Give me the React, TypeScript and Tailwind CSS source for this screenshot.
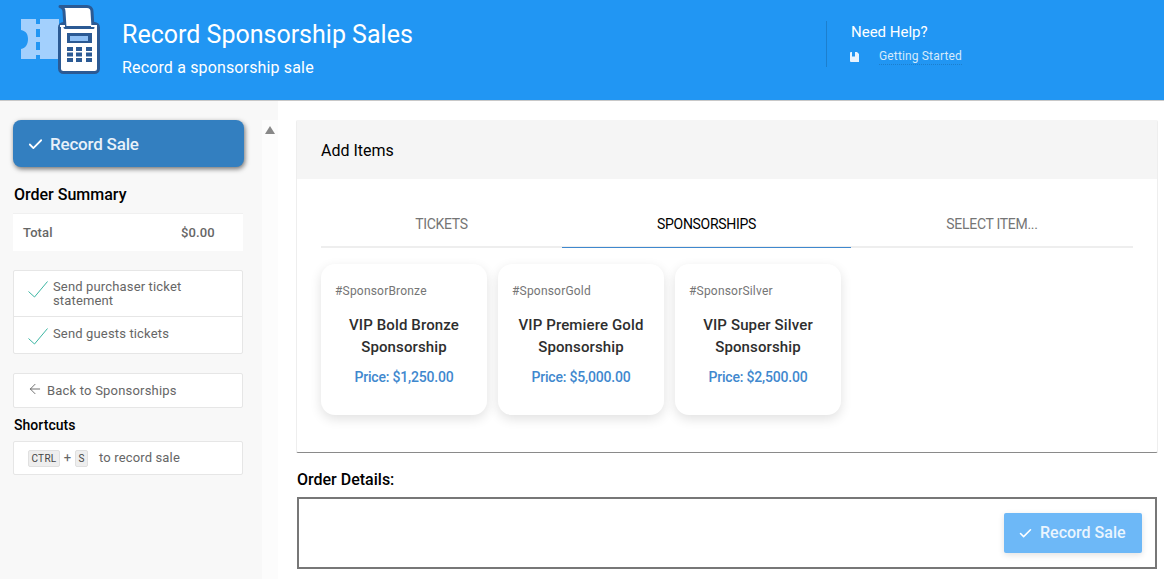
import { ArrowLeft, Check } from "lucide-react";

const sponsorships = [
  { tag: "#SponsorBronze", name: "VIP Bold Bronze Sponsorship", price: "$1,250.00" },
  { tag: "#SponsorGold", name: "VIP Premiere Gold Sponsorship", price: "$5,000.00" },
  { tag: "#SponsorSilver", name: "VIP Super Silver Sponsorship", price: "$2,500.00" },
];

function TerminalLogo() {
  return (
    <svg width="84" height="76" viewBox="20 3 84 76" className="shrink-0">
      <path d="M21 19h38v40H21V49c5-1 7-5 7-10s-2-8-7-9z" fill="#a3d0fd" />
      {[19, 29, 42, 55].map((y, i) => (
        <rect key={y} x="36" y={y} width="4" height={[5, 8, 8, 4][i]} fill="#2196f3" />
      ))}
      <rect x="59.500" y="23.500" width="39" height="49" rx="4" fill="#fff" stroke="#2b5a94" strokeWidth="3" />
      <path d="M60 6.500h27c3 0 5 2 5 5l1 16H65l-1-16c0-2-1-4-4-5z" fill="#fff" stroke="#2b5a94" strokeWidth="3" strokeLinejoin="round" />
      <rect x="60" y="25" width="5" height="2" fill="#fff" />
      <rect x="91" y="25" width="6" height="2" fill="#fff" />
      <rect x="67" y="33" width="25" height="10" fill="#2b5a94" />
      <rect x="70" y="36" width="18" height="5" fill="#8fc0f5" />
      {[67, 76, 86].flatMap((x) =>
        [47, 52.500, 58].map((y) => <rect key={`${x}-${y}`} x={x} y={y} width="6" height="4" fill="#2b5a94" />),
      )}
    </svg>
  );
}

function OptionRow({ label, border }: { label: string; border?: boolean }) {
  return (
    <div className={`flex items-start pl-[14px] pr-3 pb-[8px] ${border ? "border-t border-[#e6e6e6] pt-[10px]" : "pt-[9px]"}`}>
      <svg width="20" height="17" viewBox="0 0 20 17" className="mt-px mr-[5px] shrink-0" fill="none" stroke="#3cb5a2" strokeWidth="1">
        <path d="M0.500 10.500 L6.500 16 L19.500 0.500" />
      </svg>
      <span className="text-[13px] leading-[14px] tracking-[0.15px] text-[#666]">{label}</span>
    </div>
  );
}

export default function App() {
  return (
    <div className="h-[579px] w-[1164px] overflow-hidden bg-white font-['Roboto',sans-serif]">
      <header className="flex h-[101px] border-b border-[#c8c8c8] bg-[#2196f3] text-white">
        <div className="ml-[20px] mt-[3px]">
          <TerminalLogo />
        </div>
        <div className="ml-[18px] mt-[18px] w-[704px]">
          <h1 className="text-[25px] leading-[33px]">Record Sponsorship Sales</h1>
          <p className="mt-[7px] text-[16px] leading-[20px] tracking-[0.15px]">Record a sponsorship sale</p>
        </div>
        <div className="mt-[21px] h-[46px] border-l border-[#1c7fce] pl-6">
          <div className="mt-[2px] text-[15px] leading-[18px]">Need Help?</div>
          <div className="mt-[7px] flex items-center">
            <svg width="9" height="10" viewBox="0 0 9 10" fill="#e8f3fe" className="-ml-px mr-[20px]">
              <path d="M0 1a1 1 0 0 1 1-1h1v4.500h3V0h2l2 2v8H1a1 1 0 0 1-1-1z" />
            </svg>
            <span className="border-b border-dotted border-[#1c7fce] text-[12px] leading-[16px] tracking-[0.15px] text-[#d5eafc]">Getting Started</span>
          </div>
        </div>
      </header>

      <div className="flex h-[478px]">
        <div className="flex w-[278px] shrink-0 bg-[#f8f8f8]">
          <aside className="w-[262px] shrink-0 pl-[13px] pr-[19px] pt-[19px]">
            <button className="flex h-[47px] w-[231px] items-center rounded-[8px] bg-[#337fc0] pl-[14px] pt-[2px] text-[17px] font-medium tracking-[-0.2px] text-[#e8f1f9] shadow-[1px_2px_5px_rgba(0,0,0,0.55)]">
              <Check size={17} strokeWidth={2.500} className="mr-[6px] text-white" />
              Record Sale
            </button>
            <h2 className="ml-px mt-[18px] text-[16px] font-medium leading-[20px] text-black">Order Summary</h2>
            <div className="mt-[8px] flex h-[38px] w-[230px] items-center border-t border-[#f0f0f0] bg-white pl-[10px] text-[13px] font-medium tracking-[0.1px] text-[#666]">
              <span className="w-[158px]">Total</span>
              <span>$0.00</span>
            </div>
            <div className="mt-[19px] w-[230px] rounded-[2px] border border-[#e6e6e6] bg-white">
              <OptionRow label="Send purchaser ticket statement" />
              <OptionRow label="Send guests tickets" border />
            </div>
            <button className="mt-[19px] flex h-[35px] w-[230px] items-center rounded-[2px] border border-[#e6e6e6] bg-white pl-[13px] text-[13px] tracking-[0.2px] text-[#666]">
              <ArrowLeft size={16} strokeWidth={1.250} className="mr-[4px] -mt-[3px] text-[#555]" />
              Back to Sponsorships
            </button>
            <h3 className="ml-px mt-[7px] text-[14px] font-medium leading-[20px] tracking-[0.05px] text-black">Shortcuts</h3>
            <div className="mt-[6px] flex h-[34px] w-[230px] items-center rounded-[2px] border border-[#e6e6e6] bg-white pl-[14px] text-[13px] tracking-[0.15px] text-[#666]">
              <kbd className="h-[17px] w-[32px] rounded-[2px] border border-[#e0e0e0] bg-[#eee] text-center font-['Roboto',sans-serif] text-[10px] leading-[16px] tracking-[0.3px] text-[#444]">CTRL</kbd>
              <span className="w-[15px] text-center">+</span>
              <kbd className="h-[17px] w-[13px] rounded-[2px] border border-[#e0e0e0] bg-[#eee] text-center font-['Roboto',sans-serif] text-[10px] leading-[16px] text-[#444]">S</kbd>
              <span className="ml-[11px]">to record sale</span>
            </div>
          </aside>
          <div className="mt-[19px] w-[16px] shrink-0 bg-[#fcfcfc] pl-[3px] pt-[6px]">
            <div className="h-0 w-0 border-x-[5px] border-b-[8px] border-x-transparent border-b-[#888]" />
          </div>
        </div>

        <main className="ml-[18px] w-[862px] pt-[19px]">
          <section className="h-[333px] rounded-[2px] border-x border-b border-[#eee] border-b-[#8a8a8a] bg-white">
            <div className="flex h-[59px] items-center bg-[#f5f5f5] pl-[24px] pt-[2px] text-[16px] text-black">Add Items</div>
            <div className="mx-[24px] mt-[30px] flex h-[39px] border-b-2 border-[#eee] text-center text-[14px] leading-[30px] tracking-[-0.3px] text-[#757575]">
              <div className="w-[241px]">TICKETS</div>
              <div className="-mb-[2px] w-[289px] border-b border-[#3f88ce] text-black">SPONSORSHIPS</div>
              <div className="flex-1">SELECT ITEM...</div>
            </div>
            <div className="mx-[24px] mt-[16px] flex gap-[11px]">
              {sponsorships.map((s) => (
                <div key={s.tag} className="h-[151px] w-[166px] rounded-[14px] bg-white px-[14px] pt-[20px] text-center shadow-[0_4px_12px_rgba(0,0,0,0.12)]">
                  <div className="text-left text-[12px] leading-[14px] tracking-[0.2px] text-[#757575]">{s.tag}</div>
                  <div className="mt-[16px] text-[15px] font-medium leading-[22px] tracking-[0.13px] text-[#2e2e2e]">{s.name}</div>
                  <div className="mt-[9px] text-[14px] font-medium leading-[20px] tracking-[-0.2px] text-[#3f88ce]">Price: {s.price}</div>
                </div>
              ))}
            </div>
          </section>
          <h2 className="ml-px mt-[17px] text-[16px] font-medium leading-[20px] text-black">Order Details:</h2>
          <div className="ml-px mt-[7px] flex h-[72px] w-[860px] items-center justify-end border-2 border-[#777] pr-[13px]">
            <button className="flex h-[40px] w-[138px] items-center rounded-[2px] bg-[#6db8f7] pl-[14px] text-[16px] font-medium text-[#eaf5fe] shadow-[0_2px_6px_rgba(0,0,0,0.12)]">
              <Check size={15} strokeWidth={2.500} className="mr-[7px] text-white" />
              Record Sale
            </button>
          </div>
        </main>
      </div>
    </div>
  );
}
